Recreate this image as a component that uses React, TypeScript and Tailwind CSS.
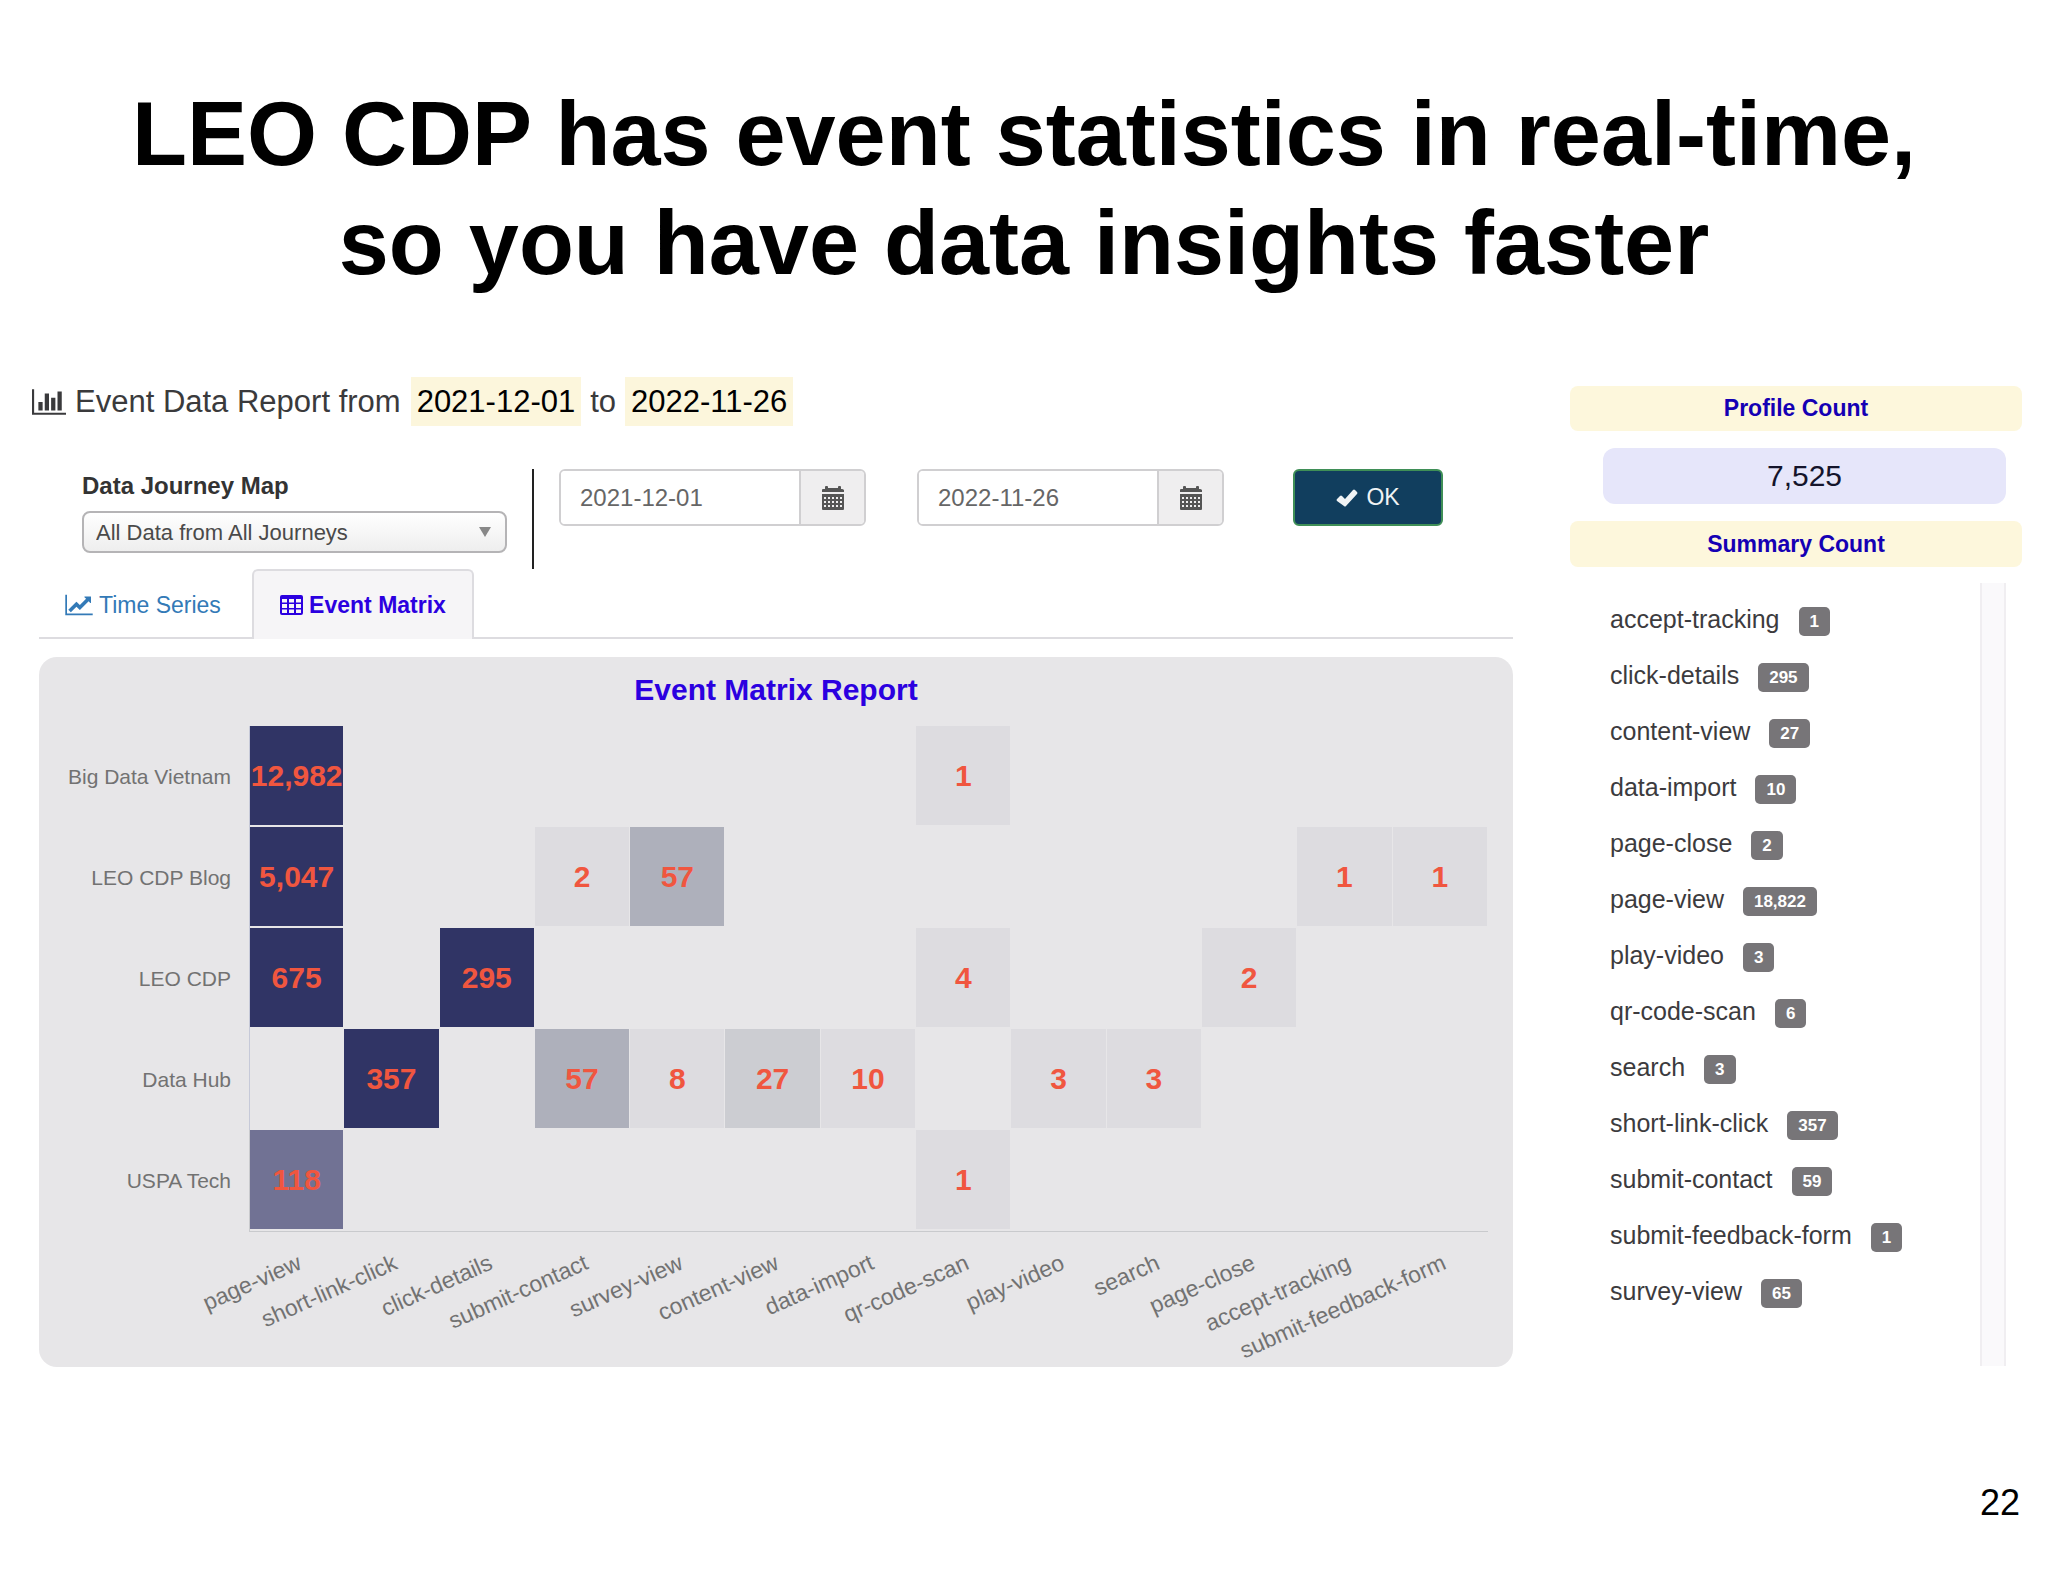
import { useState } from 'react';

const FONT = "font-['Liberation_Sans',Arial,sans-serif]";

const events = [
  'page-view',
  'short-link-click',
  'click-details',
  'submit-contact',
  'survey-view',
  'content-view',
  'data-import',
  'qr-code-scan',
  'play-video',
  'search',
  'page-close',
  'accept-tracking',
  'submit-feedback-form',
];

const journeys: { name: string; counts: Record<string, number> }[] = [
  { name: 'Big Data Vietnam', counts: { 'page-view': 12982, 'qr-code-scan': 1 } },
  {
    name: 'LEO CDP Blog',
    counts: {
      'page-view': 5047,
      'submit-contact': 2,
      'survey-view': 57,
      'accept-tracking': 1,
      'submit-feedback-form': 1,
    },
  },
  {
    name: 'LEO CDP',
    counts: { 'page-view': 675, 'click-details': 295, 'qr-code-scan': 4, 'page-close': 2 },
  },
  {
    name: 'Data Hub',
    counts: {
      'short-link-click': 357,
      'submit-contact': 57,
      'survey-view': 8,
      'content-view': 27,
      'data-import': 10,
      'play-video': 3,
      search: 3,
    },
  },
  { name: 'USPA Tech', counts: { 'page-view': 118, 'qr-code-scan': 1 } },
];

const summary: [string, number][] = [
  ['accept-tracking', 1],
  ['click-details', 295],
  ['content-view', 27],
  ['data-import', 10],
  ['page-close', 2],
  ['page-view', 18822],
  ['play-video', 3],
  ['qr-code-scan', 6],
  ['search', 3],
  ['short-link-click', 357],
  ['submit-contact', 59],
  ['submit-feedback-form', 1],
  ['survey-view', 65],
];

function heat(value?: number) {
  if (!value) return '';
  if (value > 200) return 'bg-[#303465]';
  if (value > 100) return 'bg-[#717294]';
  if (value > 50) return 'bg-[#aeb0bb]';
  if (value > 20) return 'bg-[#cccdd2]';
  return 'bg-[#dddce0]';
}

function BarChartIcon() {
  return (
    <svg viewBox="0 0 2048 1792" className="h-[30px] w-[34px] shrink-0" fill="currentColor" aria-hidden="true">
      <path d="M640 896v512h-256v-512h256zM1024 384v1024h-256v-1024h256zM2048 1536v128h-2048v-1536h128v1408h1920zM1408 640v768h-256v-768h256zM1792 256v1152h-256v-1152h256z" />
    </svg>
  );
}

function LineChartIcon() {
  return (
    <svg viewBox="0 0 2048 1792" className="h-6 w-7 shrink-0" fill="currentColor" aria-hidden="true">
      <path d="M2048 1536v128h-2048v-1536h128v1408h1920zM1920 288v435q0 21-19.5 29.5t-35.5-7.5l-121-121-633 633q-10 10-23 10t-23-10l-233-233-416 416-192-192 585-585q10-10 23-10t23 10l233 233 464-464-121-121q-16-16-7.5-35.5t29.5-19.5h435q14 0 23 9t9 23z" />
    </svg>
  );
}

function TableIcon() {
  return (
    <svg viewBox="0 0 23 20" className="h-5 w-[23px] shrink-0" fill="currentColor" aria-hidden="true">
      <path
        fillRule="evenodd"
        d="M2 0h19q2 0 2 2v16q0 2-2 2H2q-2 0-2-2V2q0-2 2-2zM2 4v3.500h5V4zm7 0v3.500h5V4zm7 0v3.500h5V4zM2 9v4h5V9zm7 0v4h5V9zm7 0v4h5V9zM2 14.500V18h5v-3.500zm7 0V18h5v-3.500zm7 0V18h5v-3.500z"
      />
    </svg>
  );
}

function CalendarIcon() {
  return (
    <svg viewBox="0 0 22 24" className="h-6 w-[22px]" fill="#555" aria-hidden="true">
      <path d="M0 6V4q0-1 1-1h2V1q0-1 1-1h1q1 0 1 1v1h10V1q0-1 1-1h1q1 0 1 1v2h1q1 0 2 1v2z" />
      <path
        fillRule="evenodd"
        d="M0 8h22v15q0 1-1 1H1q-1 0-1-1zM2 11v2h2v-2zm4 0v2h2v-2zm4 0v2h2v-2zm4 0v2h2v-2zm4 0v2h2v-2zM2 15v2h2v-2zm4 0v2h2v-2zm4 0v2h2v-2zm4 0v2h2v-2zm4 0v2h2v-2zM2 19v2h2v-2zm4 0v2h2v-2zm4 0v2h2v-2zm4 0v2h2v-2zm4 0v2h2v-2z"
      />
    </svg>
  );
}

function CheckIcon() {
  return (
    <svg viewBox="0 0 22 18" className="h-[18px] w-[22px]" fill="currentColor" aria-hidden="true">
      <path d="M1 10l3-3q1-1 2 0l3 3 8-9q1-1 2 0l2 2q1 1 0 2L10 17q-1 1-2 0l-7-5q-1-1 0-2z" />
    </svg>
  );
}

function DateField({ label, value, onChange }: { label: string; value: string; onChange: (v: string) => void }) {
  return (
    <div className="flex h-[57px] w-[307px] overflow-hidden rounded-md border-2 border-[#d0cfd1]">
      <input
        type="text"
        aria-label={label}
        value={value}
        onChange={(e) => onChange(e.target.value)}
        className="min-w-0 flex-1 bg-white pl-[19px] text-2xl text-[#666] outline-none"
      />
      <button
        type="button"
        aria-label={`Pick ${label}`}
        className="flex w-[65px] items-center justify-center border-l-2 border-[#d0cfd1] bg-[#efeeef]"
      >
        <CalendarIcon />
      </button>
    </div>
  );
}

function EventMatrix() {
  return (
    <section className="mt-[18px] rounded-[18px] bg-[#e7e6e8] pb-[10px]">
      <h3 className="pt-3 text-center text-[30px] leading-[42px] font-bold text-[#2b00e0]">Event Matrix Report</h3>
      <div className="mt-[15px] pr-[25px]">
        <table className="w-full table-fixed border-separate border-spacing-0">
          <tbody>
            {journeys.map((journey, row) => (
              <tr key={journey.name}>
                <th scope="row" className="w-[210px] pr-[18px] text-right text-[21px] font-normal text-[#727272]">
                  {journey.name}
                </th>
                {events.map((event, col) => {
                  const value = journey.counts[event];
                  return (
                    <td
                      key={event}
                      className={`h-[101px] p-0 ${col === 0 ? 'border-l border-[#c6c9d8]' : ''} ${
                        row === journeys.length - 1 ? 'border-b border-[#c9cacd]' : ''
                      }`}
                    >
                      <div
                        className={`mr-px mb-0.5 flex h-[99px] items-center justify-center text-[30px] font-bold text-[#f0563f] ${heat(value)}`}
                      >
                        {value?.toLocaleString('en-US')}
                      </div>
                    </td>
                  );
                })}
              </tr>
            ))}
          </tbody>
          <tfoot>
            <tr>
              <td />
              {events.map((event) => (
                <th key={event} scope="col" className="relative h-[125px] p-0 font-normal">
                  <span className="absolute top-[18px] right-[49px] origin-top-right -rotate-24 text-[23px] leading-6 whitespace-nowrap text-[#727272]">
                    {event}
                  </span>
                </th>
              ))}
            </tr>
          </tfoot>
        </table>
      </div>
    </section>
  );
}

function Sidebar() {
  return (
    <aside className="mt-[9px] w-[452px] shrink-0">
      <h3 className="rounded-lg bg-[#fdf7dc] text-center text-[23px] leading-[45px] font-bold text-[#1500b4]">
        Profile Count
      </h3>
      <p className="mt-[17px] mr-4 ml-[33px] rounded-xl bg-[#e6e6fa] text-center text-[30px] leading-[56px] text-[#14142b]">
        7,525
      </p>
      <h3 className="mt-[17px] rounded-lg bg-[#fdf7dc] text-center text-[23px] leading-[46px] font-bold text-[#1500b4]">
        Summary Count
      </h3>
      <div className="mt-4 mr-4 ml-10 flex h-[783px] justify-between">
        <ul className="pt-[9px]">
          {summary.map(([name, count]) => (
            <li key={name} className="flex h-14 items-center gap-[19px] text-[25px] text-[#3c3b3e]">
              {name}
              <span className="mt-0.5 rounded-[5px] bg-[#777578] px-[11px] text-[17px] leading-[29px] font-bold text-white">
                {count.toLocaleString('en-US')}
              </span>
            </li>
          ))}
        </ul>
        <div className="w-[26px] border-x-2 border-[#f0eef1] bg-[#faf9fb]" />
      </div>
    </aside>
  );
}

export default function App() {
  const [from, setFrom] = useState('2021-12-01');
  const [to, setTo] = useState('2022-11-26');

  return (
    <div className={`flex min-h-screen flex-col bg-white text-black ${FONT}`}>
      <h1 className="pt-[80px] text-center text-[90px] leading-[109px] font-bold">
        LEO CDP has event statistics in real-time,
        <br />
        so you have data insights faster
      </h1>

      <div className="mt-[79px] flex justify-between gap-[57px] pr-[26px] pl-8">
        <main className="min-w-0 flex-1">
          <h2 className="flex items-center text-[31px] leading-[49px] text-[#3a3a3c]">
            <BarChartIcon />
            <span className="ml-[9px]">Event Data Report from</span>
            <span className="ml-[10px] bg-[#fcf6dc] px-[6px] text-black">2021-12-01</span>
            <span className="mx-[9px]">to</span>
            <span className="bg-[#fcf6dc] px-[6px] text-black">2022-11-26</span>
          </h2>

          <form className="mt-[43px] flex items-start pl-[50px]" onSubmit={(e) => e.preventDefault()}>
            <div className="w-[425px]">
              <label htmlFor="journey" className="block text-2xl leading-[34px] font-bold text-[#333]">
                Data Journey Map
              </label>
              <div className="relative mt-2">
                <select
                  id="journey"
                  className="block h-[42px] w-full appearance-none rounded-lg border-2 border-[#b5b4b6] bg-linear-to-b from-white to-[#eeeeee] px-3 text-[22px] text-[#4a4a4a]"
                >
                  <option>All Data from All Journeys</option>
                </select>
                <svg viewBox="0 0 12 10" className="pointer-events-none absolute top-4 right-4 h-[10px] w-3" fill="#888" aria-hidden="true">
                  <path d="M0 0h12L6 10z" />
                </svg>
              </div>
            </div>
            <div className="mr-[25px] ml-[25px] h-[100px] w-0.5 bg-[#222]" />
            <DateField label="start date" value={from} onChange={setFrom} />
            <div className="w-[51px]" />
            <DateField label="end date" value={to} onChange={setTo} />
            <button
              type="submit"
              className="ml-[69px] flex h-[57px] w-[150px] items-center justify-center gap-2 rounded-md border-2 border-[#3f8f57] bg-[#113e5e] text-[23px] text-[#f0f3f5]"
            >
              <CheckIcon />
              OK
            </button>
          </form>

          <div className="pl-[7px]">
            <nav className="flex h-[70px] items-end border-b-2 border-[#dddce0]">
              <a href="#time-series" className="flex h-16 w-[213px] items-center gap-[6px] pl-[26px] text-[23px] text-[#337ab7]">
                <LineChartIcon />
                Time Series
              </a>
              <a
                href="#event-matrix"
                aria-current="page"
                className="-mb-0.5 flex h-[70px] w-[222px] items-center justify-center gap-[6px] rounded-t-md border-2 border-b-0 border-[#dddce0] bg-[#f6f5f7] text-[23px] font-bold text-[#2b00e0]"
              >
                <TableIcon />
                Event Matrix
              </a>
            </nav>
            <EventMatrix />
          </div>
        </main>

        <Sidebar />
      </div>

      <p className="mt-auto pr-[28px] pb-[58px] text-right text-[36px] leading-[42px]">22</p>
    </div>
  );
}
